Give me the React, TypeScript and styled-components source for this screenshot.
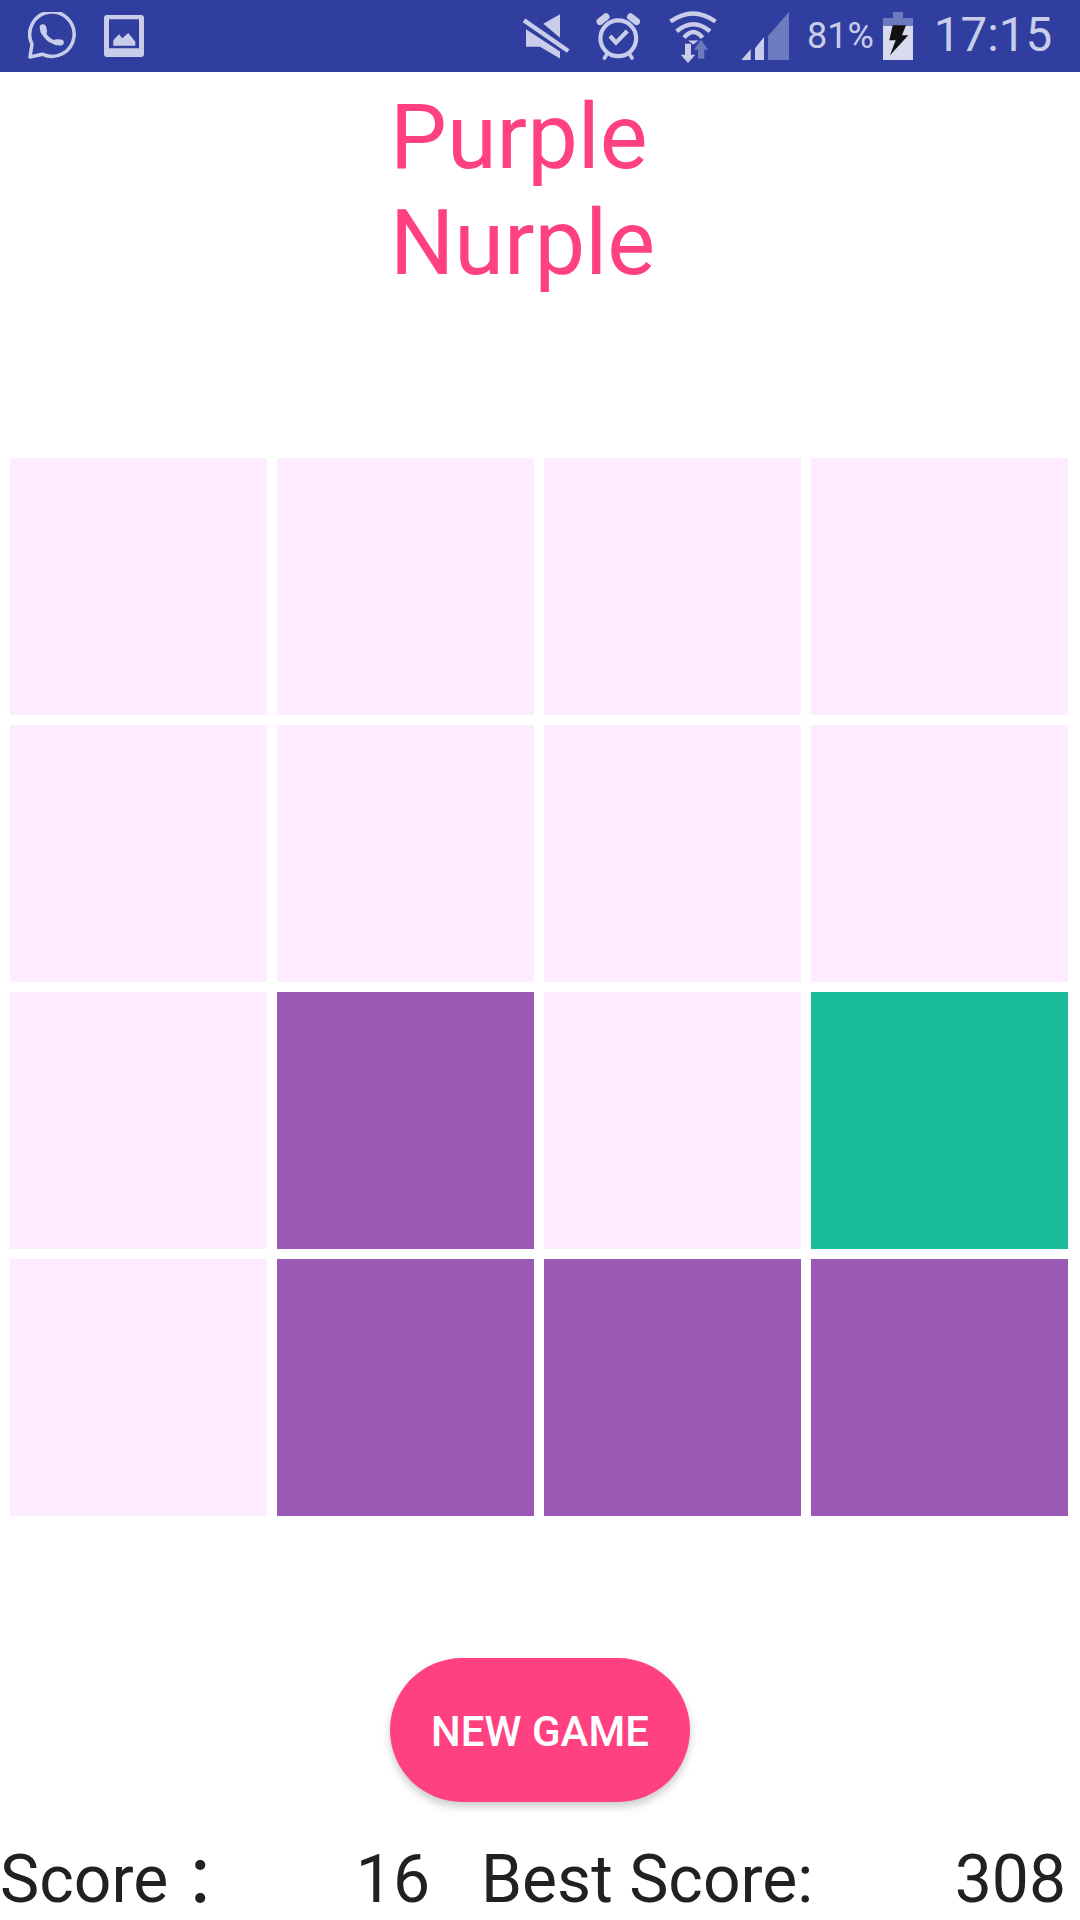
import React from "react";
import styled, { createGlobalStyle } from "styled-components";

const GlobalStyle = createGlobalStyle`
  html, body {
    margin: 0;
    padding: 0;
    background: #fff;
    font-family: Roboto, "Liberation Sans", sans-serif;
  }
`;

const BOARD = [
  [0, 0, 0, 0],
  [0, 0, 0, 0],
  [0, 1, 0, 2],
  [0, 1, 1, 1],
];

const CELL_COLORS = ["#fdecff", "#9b59b6", "#1abc9c"];

const LIGHT = "#c9cdea";
const DIM = "#6e7abe";

const WhatsappIcon = () => (
  <svg width="48" height="48" viewBox="0 0 48 48">
    <path
      d="M4 32 L2 45 L14.3 42.2 A22.2 22.2 0 1 0 4 32 Z"
      fill="none"
      stroke={LIGHT}
      strokeWidth="3.5"
      strokeLinejoin="round"
    />
    <path d="M15 16 C15 24 22 31 32 31" fill="none" stroke={LIGHT} strokeWidth="4" strokeLinecap="round" />
    <path d="M15 15.5 L15.8 19.5" fill="none" stroke={LIGHT} strokeWidth="6.5" strokeLinecap="round" />
    <path d="M28.5 30.3 L32.8 30.6" fill="none" stroke={LIGHT} strokeWidth="6" strokeLinecap="round" />
  </svg>
);

const GalleryIcon = () => (
  <svg width="40" height="42" viewBox="0 0 40 42">
    <path
      fillRule="evenodd"
      fill={LIGHT}
      d="M3 0 H37 A3 3 0 0 1 40 3 V39 A3 3 0 0 1 37 42 H3 A3 3 0 0 1 0 39 V3 A3 3 0 0 1 3 0 Z M5 4.3 V33.3 H35 V4.3 Z"
    />
    <polygon fill={LIGHT} points="9.3,30.7 9.3,25.3 15,19.3 18.3,23.3 24.3,18 31.3,26.7 31.3,30.7" />
  </svg>
);

const MuteIcon = () => (
  <svg width="48" height="45" viewBox="0 0 48 45">
    <polygon fill={LIGHT} points="21.3,9.7 38,0.3 38,23.7" />
    <polygon fill={LIGHT} points="4,15.3 4,32.7 18,32.7 38,44.6 38,37.5" />
    <line x1="2" y1="6.3" x2="46.3" y2="37" stroke={LIGHT} strokeWidth="4.5" />
  </svg>
);

const AlarmIcon = () => (
  <svg width="44" height="47" viewBox="0 0 44 47">
    <circle cx="22.3" cy="25.3" r="17.9" fill="none" stroke={LIGHT} strokeWidth="4.2" />
    <path d="M14 23 L20 29.7 L31.3 18" fill="none" stroke={LIGHT} strokeWidth="4.2" />
    <line x1="4" y1="8.5" x2="10" y2="3.8" stroke={LIGHT} strokeWidth="7" strokeLinecap="round" />
    <line x1="34.5" y1="3.8" x2="40.5" y2="8.5" stroke={LIGHT} strokeWidth="7" strokeLinecap="round" />
    <line x1="11" y1="41" x2="8.5" y2="45" stroke={LIGHT} strokeWidth="3.6" strokeLinecap="round" />
    <line x1="33.5" y1="41" x2="36" y2="45" stroke={LIGHT} strokeWidth="3.6" strokeLinecap="round" />
  </svg>
);

const WifiIcon = () => (
  <svg width="49" height="53" viewBox="0 0 49 53">
    <g fill="none" stroke={LIGHT} strokeWidth="4.4">
      <path d="M2.5 11.5 Q25 -4.7 47.5 11.5" />
      <path d="M8.7 21.3 Q25.3 7.3 42 21.3" />
      <path d="M16 27.7 Q25.3 16.3 34.6 27.7" />
    </g>
    <polygon fill={LIGHT} points="20,30.5 30.5,30.5 25.3,34.5" />
    <polygon fill={LIGHT} points="17,33.7 23,33.7 23,44.7 27.3,44.7 20,53 12.7,44.7 17,44.7" />
    <polygon fill={DIM} points="33,29.7 40,39.7 36.3,39.7 36.3,48.7 30,48.7 30,39.7 26,39.7" />
  </svg>
);

const SignalIcon = () => (
  <svg width="48" height="48" viewBox="0 0 48 48">
    <polygon fill={DIM} points="27,48 27,24 48,0 48,48" />
    <polygon fill={LIGHT} points="14,48 14,36.3 23,25 23,48" />
    <polygon fill={LIGHT} points="0.3,48 9.7,37.3 9.7,48" />
  </svg>
);

const BatteryIcon = () => (
  <svg width="30" height="48" viewBox="0 0 30 48">
    <rect x="10" y="0" width="10" height="6" fill={DIM} />
    <rect x="0" y="6" width="30" height="8" fill={DIM} />
    <rect x="0" y="14" width="30" height="34" fill="#d8dbee" />
    <polygon
      fill="#111"
      points="9.7,13.3 23,13.3 19,23.3 25.3,23.3 7,43.3 12.7,28.3 6.3,28.3"
    />
  </svg>
);

const App: React.FC = () => {
  return (
    <Page>
      <GlobalStyle />
      <StatusBar>
        <IconSlot $left={28}>
          <WhatsappIcon />
        </IconSlot>
        <IconSlot $left={28}>
          <GalleryIcon />
        </IconSlot>
        <IconSlot $left={378}>
          <MuteIcon />
        </IconSlot>
        <IconSlot $left={26}>
          <AlarmIcon />
        </IconSlot>
        <IconSlot $left={28}>
          <WifiIcon />
        </IconSlot>
        <IconSlot $left={24}>
          <SignalIcon />
        </IconSlot>
        <Percent>81%</Percent>
        <IconSlot $left={9}>
          <BatteryIcon />
        </IconSlot>
        <Clock>17:15</Clock>
      </StatusBar>
      <TitleArea>
        <Title>Purple Nurple</Title>
      </TitleArea>
      <Board>
        {BOARD.flat().map((value, i) => (
          <Cell key={i} $color={CELL_COLORS[value]} />
        ))}
      </Board>
      <NewGame>NEW GAME</NewGame>
      <ScoreRow>
        <ScoreGroup $width={481} $right={51}>
          <ScoreText>
            Score<Colon>：</Colon>
          </ScoreText>
          <ScoreText>16</ScoreText>
        </ScoreGroup>
        <ScoreGroup $width={599} $right={14}>
          <ScoreText>Best Score:</ScoreText>
          <ScoreText>308</ScoreText>
        </ScoreGroup>
      </ScoreRow>
    </Page>
  );
};

export default App;

const Page = styled.div`
  width: 1080px;
  height: 1920px;
  overflow: hidden;
  background: #fff;
`;

const StatusBar = styled.div`
  height: 72px;
  background: #303f9f;
  display: flex;
  align-items: center;
`;

const IconSlot = styled.div<{ $left: number }>`
  margin-left: ${(p) => p.$left}px;
  display: flex;
  flex-shrink: 0;

  svg {
    display: block;
  }
`;

const Percent = styled.span`
  margin-left: 18px;
  font-size: 36px;
  line-height: 1;
  color: ${LIGHT};
`;

const Clock = styled.span`
  margin-left: 21px;
  font-size: 47.5px;
  line-height: 1;
  color: ${LIGHT};
`;

const TitleArea = styled.div`
  height: 386px;
  box-sizing: border-box;
  padding: 12px 0 0 390px;
`;

const Title = styled.h1`
  margin: 0;
  width: 300px;
  font-size: 90.2px;
  line-height: 106px;
  font-weight: 400;
  color: #ff4081;
`;

const Board = styled.div`
  display: grid;
  grid-template-columns: repeat(4, 257px);
  grid-auto-rows: 257px;
  gap: 10px;
  padding-left: 10px;
`;

const Cell = styled.div<{ $color: string }>`
  background: ${(p) => p.$color};
`;

const NewGame = styled.button`
  display: block;
  width: 300px;
  height: 144px;
  margin: 142px 0 0 390px;
  padding: 2px 0 0;
  border: 0;
  border-radius: 72px;
  background: #ff4081;
  color: #fff;
  font-family: Roboto, sans-serif;
  font-size: 42px;
  font-weight: 500;
  box-shadow: 0 5px 8px rgba(0, 0, 0, 0.2);
`;

const ScoreRow = styled.div`
  display: flex;
  margin-top: 39px;
`;

const ScoreGroup = styled.div<{ $width: number; $right: number }>`
  width: ${(p) => p.$width}px;
  box-sizing: border-box;
  padding-right: ${(p) => p.$right}px;
  display: flex;
  justify-content: space-between;
`;

const ScoreText = styled.span`
  font-family: Roboto, "Noto Sans CJK JP", sans-serif;
  font-size: 66px;
  line-height: 77px;
  color: #212121;
`;

const Colon = styled.span`
  line-height: 0;
  vertical-align: -4px;
  margin-left: -1px;
`;
